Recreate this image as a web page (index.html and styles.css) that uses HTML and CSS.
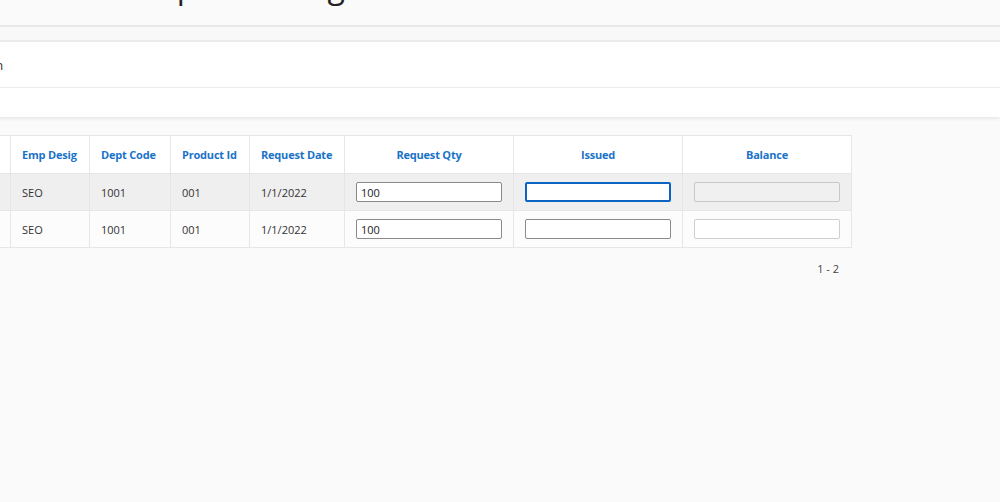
FILE: index.html
```html
<!DOCTYPE html>
<html lang="en">
<head>
  <meta charset="UTF-8">
  <title>Stock Issue Report Listing</title>
  <link rel="stylesheet" href="styles.css">
</head>
<body>
  <div class="page">
    <h1 class="title">Stock Issue Report Listing</h1>
    <div class="card">
      <div class="card-strip"></div>
      <div class="card-row"><span class="label">Designation</span></div>
      <div class="card-row small"></div>
    </div>
    <div class="grid-wrap">
      <table class="grid">
        <colgroup>
          <col style="width:90px"><col style="width:79px"><col style="width:81px"><col style="width:79px">
          <col style="width:95px"><col style="width:169px"><col style="width:169px"><col style="width:169px">
        </colgroup>
        <thead>
          <tr>
            <th>Emp Name</th><th>Emp Desig</th><th>Dept Code</th><th>Product Id</th><th>Request Date</th>
            <th class="center">Request Qty</th><th class="center">Issued</th><th class="center">Balance</th>
          </tr>
        </thead>
        <tbody>
          <tr class="alt">
            <td>Ali Khan</td><td>SEO</td><td>1001</td><td>001</td><td>1/1/2022</td>
            <td><input class="cell-input" type="text" value="100"></td>
            <td><input class="cell-input focus" type="text" value=""></td>
            <td><input class="cell-input disabled" type="text" value="" disabled></td>
          </tr>
          <tr>
            <td>Ali Khan</td><td>SEO</td><td>1001</td><td>001</td><td>1/1/2022</td>
            <td><input class="cell-input" type="text" value="100"></td>
            <td><input class="cell-input" type="text" value=""></td>
            <td><input class="cell-input off" type="text" value="" disabled></td>
          </tr>
        </tbody>
      </table>
      <div class="pager">1 - 2</div>
    </div>
  </div>
</body>
</html>
```
FILE: styles.css
```css
html, body { margin: 0; padding: 0; overflow: hidden; }
body { background-color: #fafafa; font-family: "Open Sans", "Noto Sans", Arial, sans-serif; color: #333; }
.page { margin: -34px 0 0 -90px; }
.title { margin: 0 0 0 55px; font-size: 32px; line-height: 40px; font-weight: 400; color: #222; white-space: nowrap; }
.card { margin-top: 19px; background-color: #fff; border-top: 2px solid #e8e8e8; box-shadow: 0 2px 3px rgba(0, 0, 0, 0.07); }
.card-strip { height: 13px; background-color: #f8f8f8; border-bottom: 2px solid #ebebeb; }
.card-row { height: 45px; display: flex; align-items: center; padding-left: 21px; border-bottom: 1px solid #ececec; font-size: 13px; color: #333; }
.card-row.small { height: 29px; border-bottom: none; }
.grid-wrap { margin: 18px 0 0 10px; width: 931px; }
.grid { width: 931px; table-layout: fixed; border-collapse: collapse; background-color: #fff; font-size: 11px; }
.grid th, .grid td { border: 1px solid #e6e6e6; padding: 0 11px; text-align: left; white-space: nowrap; }
.grid th { height: 37px; color: #1a73c8; font-weight: 700; letter-spacing: -0.2px; }
.grid td { height: 36px; color: #333; }
.grid th.center { text-align: center; }
.grid tr.alt td { background-color: #efefef; }
.grid tbody tr:not(.alt) td { background-color: #fcfcfc; }
.cell-input { box-sizing: border-box; width: 100%; height: 20px; margin: 0; padding: 0 4px; border: 1px solid #8a8a8a; border-radius: 2px; background-color: #fff; font-family: inherit; font-size: 11px; color: #222; outline: none; }
.cell-input.focus { border: 2px solid #0a64c2; }
.cell-input.disabled { background-color: #f0f0f0; border-color: #c8c8c8; }
.cell-input.off { background-color: #fff; border-color: #cfcfcf; }
.pager { text-align: right; padding: 13px 12px; font-size: 11px; color: #444; }
```
